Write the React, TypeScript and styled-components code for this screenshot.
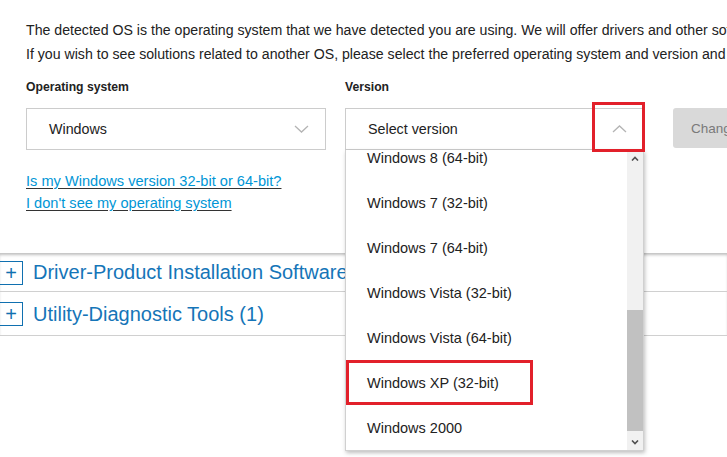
import styled, { createGlobalStyle } from 'styled-components';

const GlobalStyle = createGlobalStyle`
  html, body {
    margin: 0;
    padding: 0;
    background: #ffffff;
    overflow: hidden;
  }
  body {
    font-family: "Liberation Sans", Arial, sans-serif;
    color: #222222;
  }
`;

const VERSIONS = [
  'Windows 10 (32-bit)',
  'Windows 10 (64-bit)',
  'Windows 8.1 (32-bit)',
  'Windows 8.1 (64-bit)',
  'Windows 8 (32-bit)',
  'Windows 8 (64-bit)',
  'Windows 7 (32-bit)',
  'Windows 7 (64-bit)',
  'Windows Vista (32-bit)',
  'Windows Vista (64-bit)',
  'Windows XP (32-bit)',
  'Windows 2000',
];

const SECTIONS = ['Driver-Product Installation Software', 'Utility-Diagnostic Tools (1)'];

const Page = styled.div`
  width: 727px;
  height: 457px;
  overflow: hidden;
  position: relative;
`;

const Top = styled.div`
  padding: 18px 0 0 26px;
`;

const Intro = styled.p`
  margin: 0;
  font-size: 14.15px;
  line-height: 24px;
  white-space: nowrap;
`;

const Fields = styled.div`
  display: flex;
  align-items: flex-end;
  margin-top: 11px;
`;

const Field = styled.div<{ $width: number; $gap?: number }>`
  width: ${(p) => p.$width}px;
  margin-right: ${(p) => p.$gap ?? 0}px;
  flex-shrink: 0;
`;

const Label = styled.div`
  font-weight: bold;
  font-size: 12.2px;
  line-height: 20px;
  margin-bottom: 11px;
`;

const SelectWrap = styled.div`
  position: relative;
`;

const Select = styled.div`
  box-sizing: border-box;
  height: 42px;
  border: 1px solid #cccccc;
  display: flex;
  align-items: center;
  justify-content: space-between;
  padding: 0 16px 0 22px;
  font-size: 14.3px;
  color: #222222;
  background: #ffffff;
`;

const Chevron = styled.svg`
  width: 15px;
  height: 8px;
  flex-shrink: 0;
`;

const ChangeButton = styled.button`
  flex-shrink: 0;
  width: 110px;
  height: 40px;
  margin-bottom: 2px;
  border: none;
  border-radius: 3px;
  background: #d9d9d9;
  color: #7a7a7a;
  font-family: inherit;
  font-size: 13.5px;
  text-align: left;
  padding: 0 0 0 18px;
`;

const Links = styled.div`
  display: flex;
  flex-direction: column;
  align-items: flex-start;
  margin-top: 20px;
`;

const HelpLink = styled.a`
  font-size: 14.6px;
  line-height: 22px;
  color: #0096d6;
  text-decoration: underline;
  text-decoration-color: #333333;
  text-underline-offset: 2px;
`;

const Accordion = styled.div`
  margin-top: 39px;
  border-top: 1px solid #c8c8c8;
  box-shadow: inset 0 2px 3px -1px rgba(0, 0, 0, 0.25);
`;

const Row = styled.div<{ $first?: boolean }>`
  display: flex;
  align-items: center;
  gap: 10px;
  height: ${(p) => (p.$first ? 37 : 42)}px;
  padding-top: ${(p) => (p.$first ? 0 : 1)}px;
  border-bottom: 1px solid #d0d0d0;
`;

const PlusBox = styled.div`
  box-sizing: border-box;
  width: 24px;
  height: 24px;
  margin-left: -1px;
  border: 1px solid #1070b0;
  display: flex;
  align-items: center;
  justify-content: center;
  color: #1070b0;
  font-size: 20px;
  line-height: 1;
`;

const RowTitle = styled.span`
  font-size: 20px;
  color: #1575b8;
  white-space: nowrap;
`;

const Dropdown = styled.div`
  position: absolute;
  top: 42px;
  left: 0;
  width: 299px;
  height: 301px;
  box-sizing: border-box;
  background: #ffffff;
  border: 1px solid #d0d0d0;
  border-top: none;
  box-shadow: 1px 2px 4px rgba(0, 0, 0, 0.25);
  display: flex;
  z-index: 2;
`;

const Options = styled.div`
  flex: 1;
  display: flex;
  flex-direction: column;
  justify-content: flex-end;
  overflow: hidden;
`;

const Option = styled.div<{ $marked?: boolean }>`
  flex-shrink: 0;
  box-sizing: border-box;
  height: 45px;
  display: flex;
  align-items: center;
  font-size: 14.5px;
  color: #222222;
  white-space: nowrap;
  width: ${(p) => (p.$marked ? '187px' : 'auto')};
  padding-left: ${(p) => (p.$marked ? 18 : 21)}px;
  border: ${(p) => (p.$marked ? '3px solid #e2202a' : 'none')};
`;

const Scrollbar = styled.div`
  width: 16px;
  flex-shrink: 0;
  background: #f1f1f1;
  display: flex;
  flex-direction: column;
`;

const ScrollButton = styled.div`
  height: 16px;
  display: flex;
  align-items: center;
  justify-content: center;
`;

const Track = styled.div`
  flex: 1;
  display: flex;
  flex-direction: column;
  justify-content: flex-end;
  padding-bottom: 3px;
`;

const Thumb = styled.div`
  height: 121px;
  background: #c1c1c1;
`;

const Marker = styled.div`
  position: absolute;
  left: 247px;
  top: -6px;
  width: 53px;
  height: 50px;
  box-sizing: border-box;
  border: 3px solid #e2202a;
  z-index: 3;
`;

const ChevronDown = () => (
  <Chevron viewBox="0 0 15 8">
    <path d="M1 1 L7.5 7 L14 1" fill="none" stroke="#b4b4b4" strokeWidth="1.3" />
  </Chevron>
);

const ChevronUp = () => (
  <Chevron viewBox="0 0 15 8">
    <path d="M1 7 L7.5 1 L14 7" fill="none" stroke="#b4b4b4" strokeWidth="1.3" />
  </Chevron>
);

const Caret = ({ up }: { up?: boolean }) => (
  <svg width="8" height="5" viewBox="0 0 8 5">
    <path
      d={up ? 'M1 4.5 L4 1.5 L7 4.5' : 'M1 0.5 L4 3.5 L7 0.5'}
      fill="none"
      stroke="#505050"
      strokeWidth="1.6"
    />
  </svg>
);

export default function App() {
  return (
    <Page>
      <GlobalStyle />
      <Top>
        <Intro>
          The detected OS is the operating system that we have detected you are using. We will offer drivers and other software
          <br />
          If you wish to see solutions related to another OS, please select the preferred operating system and version and click Change.
        </Intro>

        <Fields>
          <Field $width={300} $gap={19}>
            <Label>Operating system</Label>
            <SelectWrap>
              <Select>
                Windows
                <ChevronDown />
              </Select>
            </SelectWrap>
          </Field>

          <Field $width={299} $gap={29}>
            <Label>Version</Label>
            <SelectWrap>
              <Select>
                Select version
                <ChevronUp />
              </Select>
              <Marker />
              <Dropdown>
                <Options>
                  {VERSIONS.map((v) => (
                    <Option key={v} $marked={v === 'Windows XP (32-bit)'}>
                      {v}
                    </Option>
                  ))}
                </Options>
                <Scrollbar>
                  <ScrollButton>
                    <Caret up />
                  </ScrollButton>
                  <Track>
                    <Thumb />
                  </Track>
                  <ScrollButton>
                    <Caret />
                  </ScrollButton>
                </Scrollbar>
              </Dropdown>
            </SelectWrap>
          </Field>

          <ChangeButton>Change</ChangeButton>
        </Fields>

        <Links>
          <HelpLink href="#">Is my Windows version 32-bit or 64-bit?</HelpLink>
          <HelpLink href="#">I don't see my operating system</HelpLink>
        </Links>
      </Top>

      <Accordion>
        {SECTIONS.map((s, i) => (
          <Row key={s} $first={i === 0}>
            <PlusBox>+</PlusBox>
            <RowTitle>{s}</RowTitle>
          </Row>
        ))}
      </Accordion>
    </Page>
  );
}
